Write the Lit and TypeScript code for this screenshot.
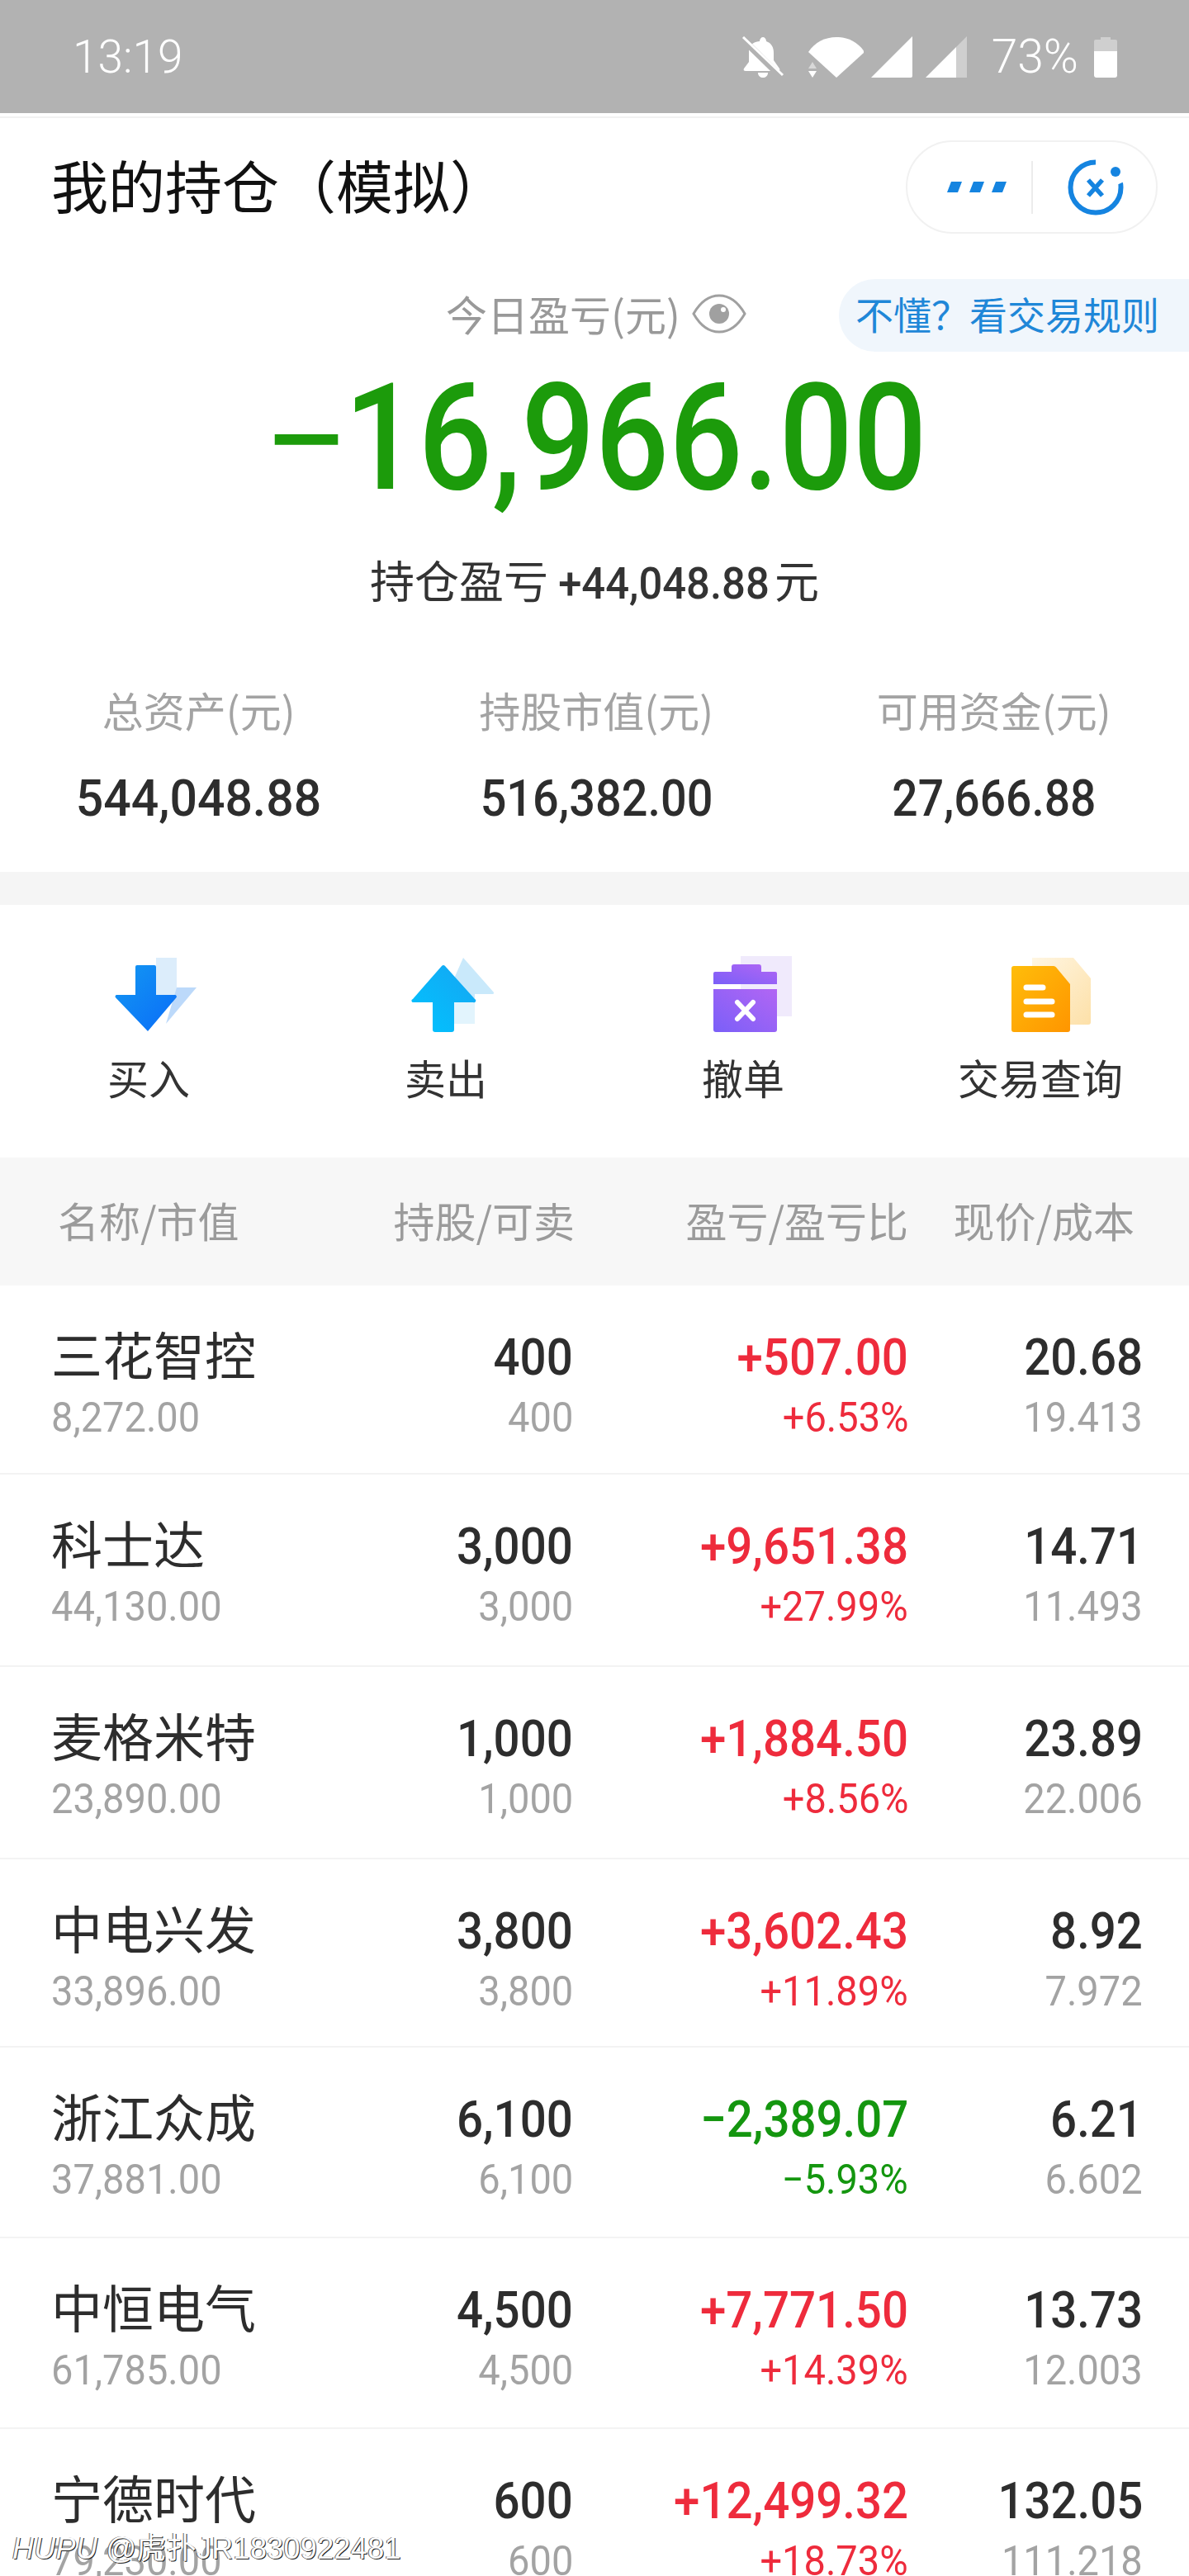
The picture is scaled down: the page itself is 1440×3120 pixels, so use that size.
import { LitElement, css, html, svg } from "lit";
import { customElement } from "lit/decorators.js";
import { classMap } from "lit/directives/class-map.js";

interface Holding {
  name: string;
  value: string;
  held: string;
  sellable: string;
  pnl: string;
  ratio: string;
  price: string;
  cost: string;
  height: number;
}

const holdings: Holding[] = [
  { name: "三花智控", value: "8,272.00", held: "400", sellable: "400", pnl: "+507.00", ratio: "+6.53%", price: "20.68", cost: "19.413", height: 229 },
  { name: "科士达", value: "44,130.00", held: "3,000", sellable: "3,000", pnl: "+9,651.38", ratio: "+27.99%", price: "14.71", cost: "11.493", height: 233 },
  { name: "麦格米特", value: "23,890.00", held: "1,000", sellable: "1,000", pnl: "+1,884.50", ratio: "+8.56%", price: "23.89", cost: "22.006", height: 233 },
  { name: "中电兴发", value: "33,896.00", held: "3,800", sellable: "3,800", pnl: "+3,602.43", ratio: "+11.89%", price: "8.92", cost: "7.972", height: 228 },
  { name: "浙江众成", value: "37,881.00", held: "6,100", sellable: "6,100", pnl: "−2,389.07", ratio: "−5.93%", price: "6.21", cost: "6.602", height: 231 },
  { name: "中恒电气", value: "61,785.00", held: "4,500", sellable: "4,500", pnl: "+7,771.50", ratio: "+14.39%", price: "13.73", cost: "12.003", height: 231 },
  { name: "宁德时代", value: "79,230.00", held: "600", sellable: "600", pnl: "+12,499.32", ratio: "+18.73%", price: "132.05", cost: "111.218", height: 231 },
];

// squeeze: roboto is wider than the din-like digits, and not by the same amount per number
const stats = [
  { label: "总资产(元)", value: "544,048.88", squeeze: 0.95 },
  { label: "持股市值(元)", value: "516,382.00", squeeze: 0.9 },
  { label: "可用资金(元)", value: "27,666.88", squeeze: 0.89 },
];

const buyIcon = svg`
  <defs>
    <linearGradient id="buy" x1="0" y1="0" x2="1" y2="1">
      <stop offset="0" stop-color="#1398f2" /><stop offset="1" stop-color="#0a6cf8" />
    </linearGradient>
  </defs>
  <rect x="69" y="5" width="25" height="50" fill="#dcedfb" />
  <path d="M94 41H118L81 85Z" fill="#bcd9fa" />
  <path d="M46 14h21a2 2 0 0 1 2 2V50h23a2 2 0 0 1 1.500 3.200L59 94 20 53.200A2 2 0 0 1 21 50H44V16a2 2 0 0 1 2-2Z" fill="url(#buy)" />
`;

const sellIcon = svg`
  <defs>
    <linearGradient id="sell" x1="0" y1="1" x2="1" y2="0">
      <stop offset="0" stop-color="#00c4ff" /><stop offset="1" stop-color="#16a5f2" />
    </linearGradient>
  </defs>
  <path d="M81 5 118 47a1.500 1.500 0 0 1-1 2H95V59H70V30Z" fill="#c9e9fb" />
  <rect x="70" y="59" width="25" height="26" fill="#e2f4fd" />
  <path d="M55 15a3 3 0 0 1 4 0L95 55a2 2 0 0 1-2 4H70V92a3 3 0 0 1-3 3H47a3 3 0 0 1-3-3V59H21a2 2 0 0 1-1-4Z" fill="url(#sell)" />
`;

const cancelIcon = svg`
  <defs>
    <linearGradient id="cancel" x1="0" y1="1" x2="1" y2="0">
      <stop offset="0" stop-color="#7a5ff8" /><stop offset="1" stop-color="#b266f4" />
    </linearGradient>
  </defs>
  <rect x="57" y="3" width="62" height="73" fill="#f0eafc" />
  <path d="M46 22V16a3 3 0 0 1 3-3H79a3 3 0 0 1 3 3v6H99a2 2 0 0 1 2 2V37H24V24a2 2 0 0 1 2-2Z" fill="url(#cancel)" />
  <path d="M24 43H101V92a3 3 0 0 1-3 3H27a3 3 0 0 1-3-3Z" fill="url(#cancel)" />
  <path d="M53 59 72 79M72 59 53 79" stroke="#fff" stroke-width="6" stroke-linecap="round" />
`;

const queryIcon = svg`
  <defs>
    <linearGradient id="query" x1="0" y1="0" x2="1" y2="1">
      <stop offset="0" stop-color="#ffbd0a" /><stop offset="1" stop-color="#ff9500" />
    </linearGradient>
    <linearGradient id="query-back" x1="0" y1="0" x2="1" y2="1">
      <stop offset="0" stop-color="#fff6e2" /><stop offset="1" stop-color="#fde0a8" />
    </linearGradient>
  </defs>
  <path d="M50 5H100L121 30V83a3 3 0 0 1-3 3H50Z" fill="url(#query-back)" />
  <path d="M28 15H76a4 4 0 0 1 3 1.500L96 37V92a3 3 0 0 1-3 3H28a3 3 0 0 1-3-3V18a3 3 0 0 1 3-3Z" fill="url(#query)" />
  <path d="M43 41H63M43 58H74M43 74H74" stroke="#fff" stroke-width="7" stroke-linecap="round" />
`;

const actions = [
  { label: "买入", icon: buyIcon },
  { label: "卖出", icon: sellIcon },
  { label: "撤单", icon: cancelIcon },
  { label: "交易查询", icon: queryIcon },
];

@customElement("app-root")
export class AppRoot extends LitElement {
  static styles = css`
    :host {
      display: block;
      position: relative;
      width: 1440px;
      height: 3120px;
      overflow: hidden;
      background: #fff;
      font-family: "Noto Sans CJK SC", "Noto Sans", sans-serif;
      color: #2d2d2d;
    }

    .status {
      height: 137px;
      background: #b2b2b2;
      display: flex;
      align-items: center;
      padding: 0 87px 0 88px;
      box-sizing: border-box;
      color: #fff;
      font-family: Roboto, sans-serif;
      font-weight: 300;
    }

    .time {
      font-size: 55px;
      flex: 1;
    }

    .status-icons {
      display: flex;
      align-items: center;
    }

    .status-icons svg {
      display: block;
    }

    .bell {
      margin-right: 28px;
    }

    .bars-one {
      margin: 0 16px 0 9px;
    }

    .battery-text {
      font-size: 57px;
      margin: 0 19px 0 30px;
    }

    .nav {
      margin-top: 4px;
      border-top: 2px solid #f2f2f2;
      display: flex;
      align-items: center;
      justify-content: space-between;
      padding: 27px 38px 67px 62px;
    }

    .title {
      font-size: 69px;
      line-height: 90px;
      margin-top: -8px;
      color: #111;
    }

    .capsule {
      width: 305px;
      height: 113px;
      box-sizing: border-box;
      border: 2px solid #f1f1f1;
      border-radius: 57px;
      display: flex;
      align-items: center;
      padding-left: 48px;
    }

    .capsule .divider {
      width: 2px;
      height: 64px;
      background: #ececec;
      margin: 0 42px 0 30px;
    }

    .hero {
      position: relative;
      display: flex;
      flex-direction: column;
      align-items: center;
      height: 706px;
    }

    .hero-label {
      display: flex;
      align-items: center;
      gap: 14px;
      height: 60px;
      padding-left: 4px;
      font-size: 50px;
      color: #999;
    }

    .hero-label span {
      margin-top: -2px;
    }

    .rule-pill {
      position: absolute;
      top: -12px;
      right: 0;
      width: 424px;
      height: 88px;
      box-sizing: border-box;
      padding-left: 20px;
      border-radius: 44px 0 0 44px;
      background: #f0f6fc;
      color: #1f87d8;
      font-size: 46px;
      line-height: 82px;
      white-space: nowrap;
    }

    .num {
      display: inline-block;
      font-family: Roboto, "Liberation Sans", sans-serif;
      white-space: nowrap;
    }

    .big {
      margin: 30px 0 0 8px;
      height: 180px;
      line-height: 180px;
      font-size: 180px;
      font-weight: 500;
      color: #1c9b0b;
      transform: scaleX(0.875);
    }

    .big::first-letter {
      font-family: "Liberation Sans", sans-serif;
    }

    .float {
      margin-top: 52px;
      height: 60px;
      line-height: 60px;
      font-size: 54px;
      color: #333;
    }

    .float .num {
      font-size: 54px;
      font-weight: 500;
      transform: scaleX(0.94);
      margin: 0 -2px 0 -8px;
    }

    .stats {
      margin-top: 97px;
      align-self: flex-start;
      display: grid;
      grid-template-columns: repeat(3, 481.5px);
      text-align: center;
    }

    .stat-label {
      height: 60px;
      line-height: 60px;
      font-size: 50px;
      color: #a3a3a3;
    }

    .stat-value {
      margin-top: 48px;
      height: 60px;
      line-height: 60px;
      font-size: 62px;
      font-weight: 500;
      color: #2d2d2d;
    }

    .gap {
      height: 40px;
      background: #f5f5f5;
    }

    .actions {
      display: grid;
      grid-template-columns: repeat(4, 1fr);
      padding: 59px 0 69px;
      text-align: center;
      font-size: 50px;
      line-height: 58px;
      color: #333;
    }

    .actions svg {
      display: block;
      margin: 0 auto 20px;
      overflow: visible;
    }

    .grid {
      display: grid;
      grid-template-columns: 338px 294px 406px 282px;
      padding: 0 58px 0 62px;
      text-align: right;
    }

    .table-head {
      height: 155px;
      background: #f7f7f7;
      color: #9b9b9b;
      font-size: 50px;
      line-height: 150px;
    }

    .table-head .first {
      padding-left: 8px;
      text-align: left;
    }

    .table-head .second {
      margin-right: -2px;
    }

    .table-head .last {
      padding-right: 8px;
    }

    .row {
      box-sizing: border-box;
      padding-top: 47px;
      border-bottom: 2px solid #f3f3f3;
    }

    .main {
      height: 68px;
      line-height: 68px;
      font-size: 62px;
      font-weight: 500;
    }

    .sub {
      height: 60px;
      margin-top: 10px;
      line-height: 60px;
      font-size: 50px;
      color: #a3a3a3;
    }

    .main .num {
      transform: scaleX(0.91);
      transform-origin: right center;
    }

    .sub .num {
      transform: scaleX(0.94);
      transform-origin: right center;
    }

    .name {
      text-align: left;
    }

    .name .sub .num {
      transform-origin: left center;
    }

    .name .main {
      font-weight: 400;
      font-size: 62px;
      padding-top: 1px;
    }

    .name .sub {
      margin-top: 9px;
    }

    .price {
      margin-right: -2px;
    }

    .up .main,
    .up .sub {
      color: #ee2b3c;
    }

    .down .main,
    .down .sub {
      color: #14960f;
    }

    .watermark {
      position: absolute;
      left: 15px;
      top: 3066px;
      font-family: "Liberation Sans", "Noto Sans CJK SC", sans-serif;
      font-size: 36px;
      line-height: 42px;
      letter-spacing: 0.3px;
      font-style: italic;
      color: #fff;
      text-shadow: 1px 1px 0 #222, -1px 0 0 #555;
      white-space: nowrap;
    }

    .watermark span {
      font-style: normal;
    }
  `;

  private statusBar() {
    return html`
      <div class="status">
        <div class="time">13:19</div>
        <div class="status-icons">
          <svg class="bell" width="52" height="50" viewBox="0 0 52 50">
            <path d="M26 1c2 0 4 2 4 5 6 2 9 7 9 14v9l7 10c1 2 0 3-2 3H5c-2 0-3-1-2-3l6-8V15C9 10 17 6 22 6c0-3 2-5 4-5Z" fill="#fff" />
            <path d="M20 44h12c0 4-3 6-6 6s-6-2-6-6Z" fill="#fff" />
            <path d="M2 4 49 50" stroke="#b2b2b2" stroke-width="8" />
            <path d="M2 1 50 47" stroke="#fff" stroke-width="3" />
          </svg>
          <svg width="68" height="50" viewBox="0 0 68 50">
            <path d="M0 19C8 7 20 1 34 1s26 6 34 18L34 50Z" transform="translate(1 0)" fill="#fff" />
            <path d="M6 31 1 39H11Z" fill="#d8d8d8" />
            <path d="M1 42H11L6 50Z" fill="#fff" />
          </svg>
          <svg class="bars-one" width="50" height="50" viewBox="0 0 50 50">
            <path d="M50 0V48a2 2 0 0 1-2 2H0Z" fill="#fff" />
          </svg>
          <svg width="50" height="50" viewBox="0 0 50 50">
            <path d="M50 0V50H37V13Z" fill="#cfcfcf" />
            <path d="M37 13V50H0Z" fill="#fff" />
          </svg>
          <div class="battery-text">73%</div>
          <svg width="28" height="50" viewBox="0 0 28 50">
            <path d="M8 4V1h12v3h6a2 2 0 0 1 2 2V18H0V6a2 2 0 0 1 2-2Z" fill="#cfcfcf" />
            <path d="M0 18H28V47a3 3 0 0 1-3 3H3a3 3 0 0 1-3-3Z" fill="#fff" />
          </svg>
        </div>
      </div>
    `;
  }

  private capsule() {
    return html`
      <div class="capsule">
        <svg width="72" height="14" viewBox="0 0 72 14">
          <path d="M5 0H18L13 13H0ZM32 0H45L40 13H27ZM59 0H72L67 13H54Z" fill="#1584e0" />
        </svg>
        <div class="divider"></div>
        <svg width="68" height="68" viewBox="0 0 68 68">
          <path d="M34 3.500C17 3.500 3.500 17 3.500 34S17 64.500 34 64.500 64.500 51 64.500 34c0-2 0-4-.5-5" fill="none" stroke="#1584e0" stroke-width="6" />
          <circle cx="58" cy="15" r="6" fill="#1584e0" />
          <path d="M25 25 42 44M42 25 25 44" stroke="#1584e0" stroke-width="5.500" />
        </svg>
      </div>
    `;
  }

  private hero() {
    return html`
      <div class="hero">
        <div class="hero-label">
          <span>今日盈亏(元)</span>
          <svg width="66" height="48" viewBox="0 0 66 48">
            <path d="M2 24C10 10 20 2 33 2s23 8 31 22c-8 14-18 22-31 22S10 38 2 24Z" fill="none" stroke="#a0a0a0" stroke-width="3" />
            <circle cx="33" cy="24" r="12" fill="#a0a0a0" />
            <circle cx="38" cy="19" r="3" fill="#fff" />
          </svg>
        </div>
        <div class="rule-pill">不懂？看交易规则</div>
        <div class="big num">−16,966.00</div>
        <div class="float">持仓盈亏 <span class="num">+44,048.88</span>元</div>
        <div class="stats">
          ${stats.map(
            (s) => html`<div>
              <div class="stat-label">${s.label}</div>
              <div class="stat-value num" style="transform:scaleX(${s.squeeze})">${s.value}</div>
            </div>`
          )}
        </div>
      </div>
    `;
  }

  render() {
    return html`
      ${this.statusBar()}
      <div class="nav">
        <div class="title">我的持仓（模拟）</div>
        ${this.capsule()}
      </div>
      ${this.hero()}
      <div class="gap"></div>
      <div class="actions">
        ${actions.map(
          (a) => html`<div>
            <svg width="120" height="100" viewBox="0 0 120 100">${a.icon}</svg>
            ${a.label}
          </div>`
        )}
      </div>
      <div class="grid table-head">
        <div class="first">名称/市值</div>
        <div class="second">持股/可卖</div>
        <div>盈亏/盈亏比</div>
        <div class="last">现价/成本</div>
      </div>
      ${holdings.map((h) => {
        const cls = { up: h.pnl.startsWith("+"), down: !h.pnl.startsWith("+") };
        return html`
          <div class="grid row" style="height:${h.height}px">
            <div class="name">
              <div class="main">${h.name}</div>
              <div class="sub"><span class="num">${h.value}</span></div>
            </div>
            <div>
              <div class="main"><span class="num">${h.held}</span></div>
              <div class="sub"><span class="num">${h.sellable}</span></div>
            </div>
            <div class=${classMap(cls)}>
              <div class="main"><span class="num">${h.pnl}</span></div>
              <div class="sub"><span class="num">${h.ratio}</span></div>
            </div>
            <div class="price">
              <div class="main"><span class="num">${h.price}</span></div>
              <div class="sub"><span class="num">${h.cost}</span></div>
            </div>
          </div>
        `;
      })}
      <div class="watermark">HUPU <span>@虎扑JR1830922481</span></div>
    `;
  }
}
